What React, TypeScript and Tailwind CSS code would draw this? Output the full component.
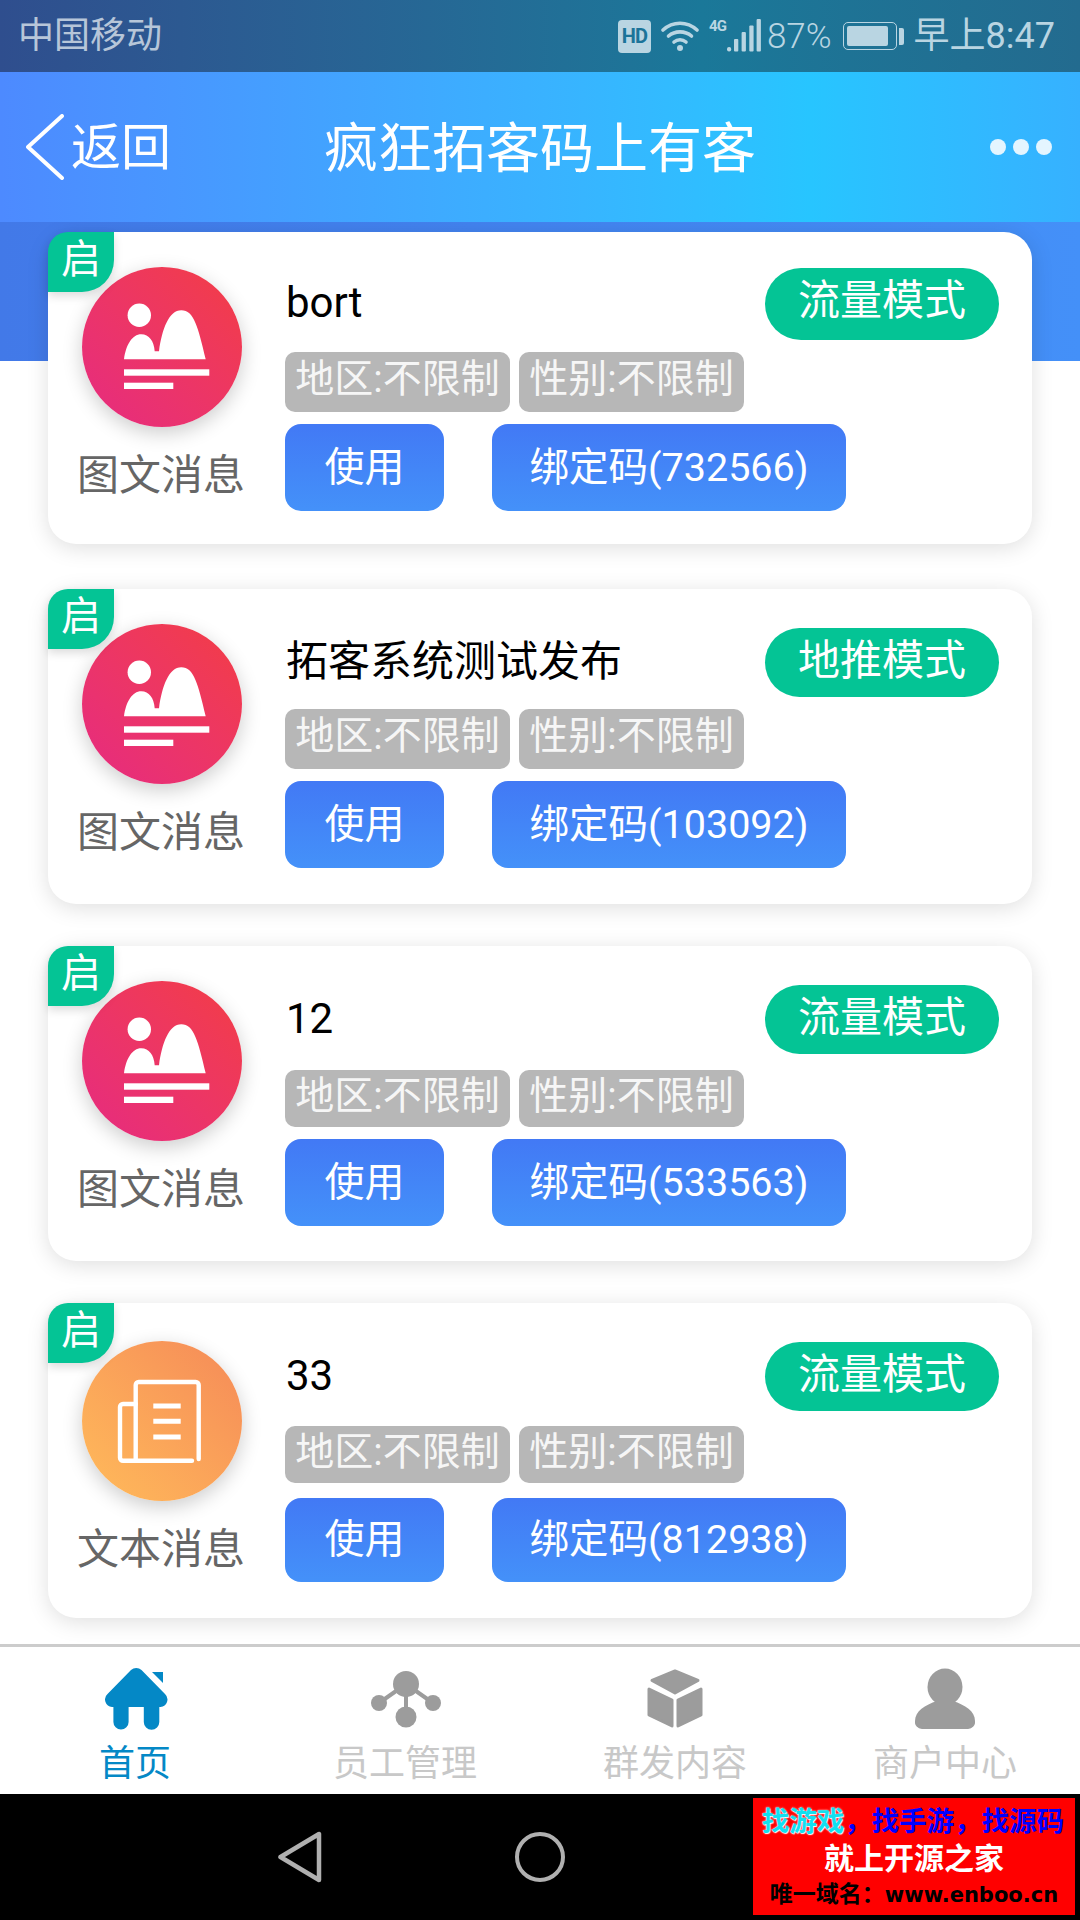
import React from "react";

type Campaign = {
  title: string;
  mode: string;
  code: string;
  kind: "image" | "text";
  card: string;
  circleTop: string;
  bodyTop: string;
  pill: string;
  tagRow: string;
  btnRow: string;
};

const CAMPAIGNS: Campaign[] = [
  {
    title: "bort",
    mode: "流量模式",
    code: "732566",
    kind: "image",
    card: "h-[312px] mt-[0px]",
    circleTop: "mt-[35px]",
    bodyTop: "pt-[36px]",
    pill: "h-[72px] pb-[6px]",
    tagRow: "mt-[12px] h-[60px]",
    btnRow: "mt-[12px] h-[87px]",
  },
  {
    title: "拓客系统测试发布",
    mode: "地推模式",
    code: "103092",
    kind: "image",
    card: "h-[315px] mt-[45px]",
    circleTop: "mt-[35px]",
    bodyTop: "pt-[39px]",
    pill: "h-[69px] pb-[3px]",
    tagRow: "mt-[12px] h-[60px]",
    btnRow: "mt-[12px] h-[87px]",
  },
  {
    title: "12",
    mode: "流量模式",
    code: "533563",
    kind: "image",
    card: "h-[315px] mt-[42px]",
    circleTop: "mt-[35px]",
    bodyTop: "pt-[39px]",
    pill: "h-[69px] pb-[3px]",
    tagRow: "mt-[16px] h-[57px]",
    btnRow: "mt-[12px] h-[87px]",
  },
  {
    title: "33",
    mode: "流量模式",
    code: "812938",
    kind: "text",
    card: "h-[315px] mt-[42px]",
    circleTop: "mt-[38px]",
    bodyTop: "pt-[39px]",
    pill: "h-[69px] pb-[3px]",
    tagRow: "mt-[15px] h-[57px]",
    btnRow: "mt-[15px] h-[84px]",
  },
];

function ImageMsgIcon() {
  return (
    <svg viewBox="0 0 160 160" className="h-[160px] w-[160px]" fill="#fff">
      <circle cx="57.3" cy="48.3" r="11.7" />
      <path d="M42 92.3C44 78 50 67.3 59.3 67.3C67 67.3 72 74 72.7 84.3L77 84.3C80 62 87 43.3 99.3 43.3C112 43.3 116 60 123.7 92.3Z" />
      <rect x="42" y="102.3" width="85.3" height="6.4" />
      <rect x="42" y="115.7" width="49.3" height="6.3" />
    </svg>
  );
}

function TextMsgIcon() {
  return (
    <svg viewBox="0 0 160 160" className="h-[160px] w-[160px]" fill="none" stroke="#fff" strokeWidth="4.4" strokeLinecap="round">
      <path d="M53.7 119.7V44a3 3 0 0 1 3-3H113.7a3 3 0 0 1 3 3V118" />
      <path d="M110 119.7H41a3 3 0 0 1-3-3V66a3 3 0 0 1 3-3H53.7" />
      <path strokeLinecap="butt" strokeWidth="5" d="M71.3 65H98.7M71.3 80.3H98.7M71.3 96H98.7" />
    </svg>
  );
}

function Card({ item }: { item: Campaign }) {
  return (
    <div className={`relative flex rounded-[28px] bg-white shadow-[0_4px_22px_rgba(0,0,0,0.13)] ${item.card}`}>
      {/* status corner */}
      <div className="absolute top-0 left-0 z-10 flex h-[60px] w-[66px] items-center justify-center rounded-tl-[20px] rounded-br-[32px] bg-[#04c495] pb-[4px] text-[40px] leading-none text-white shadow-[0_4px_10px_rgba(0,0,0,0.14)]">
        启
      </div>

      <div className={`ml-[34px] flex w-[160px] shrink-0 flex-col items-center ${item.circleTop}`}>
        <div
          className={`h-[160px] w-[160px] rounded-full shadow-[0_6px_20px_rgba(0,0,0,0.2)] ${
            item.kind === "image"
              ? "bg-gradient-to-tr from-[#e62a80] to-[#f33d43]"
              : "bg-gradient-to-tr from-[#ffbb5a] to-[#f58a58]"
          }`}
        >
          {item.kind === "image" ? <ImageMsgIcon /> : <TextMsgIcon />}
        </div>
        <div className="mt-[21px] -translate-x-px whitespace-nowrap text-[42px] leading-[56px] text-[#666]">
          {item.kind === "image" ? "图文消息" : "文本消息"}
        </div>
      </div>

      <div className={`ml-[43px] flex-1 pr-[33px] ${item.bodyTop}`}>
        <div className="flex items-center justify-between">
          <div className="mb-[2px] ml-px text-[42px] leading-[56px] text-black">{item.title}</div>
          <div className={`flex w-[234px] items-center justify-center rounded-full bg-[#04c495] text-[42px] leading-none text-white ${item.pill}`}>
            {item.mode}
          </div>
        </div>
        <div className={`flex gap-[9px] ${item.tagRow}`}>
          <div className="flex w-[225px] items-center justify-center rounded-[10px] bg-[#b7b7b7] pb-[5px] text-[39px] leading-none whitespace-nowrap text-[#f6f6f6]">
            地区:不限制
          </div>
          <div className="flex w-[225px] items-center justify-center rounded-[10px] bg-[#b7b7b7] pb-[5px] text-[39px] leading-none whitespace-nowrap text-[#f6f6f6]">
            性别:不限制
          </div>
        </div>
        <div className={`flex gap-[48px] ${item.btnRow}`}>
          <div className="flex w-[159px] items-center justify-center rounded-[16px] bg-gradient-to-b from-[#4279f5] to-[#4491f9] text-[40px] leading-none text-white">
            使用
          </div>
          <div className="flex w-[354px] items-center justify-center rounded-[16px] bg-gradient-to-b from-[#4279f5] to-[#4491f9] text-[39.5px] leading-none whitespace-nowrap text-white">
            绑定码({item.code})
          </div>
        </div>
      </div>
    </div>
  );
}

function StatusBar() {
  return (
    <div className="flex h-[72px] items-center justify-between bg-gradient-to-r from-[#2f4e8e] via-[#1a7899] via-65% to-[#236b8f] pr-[25px] pl-[18px]">
      <div className="text-[36px] leading-none text-[#b7c6d9]">中国移动</div>
      <div className="flex items-center text-[#b9d5e2]">
        <div className="flex h-[33px] w-[33px] items-center justify-center rounded-[4px] bg-[#b9d5e2] text-[20px] leading-none font-bold tracking-tighter text-[#1b7499]">
          HD
        </div>
        <svg viewBox="0 0 38 32" className="ml-[10px] h-[32px] w-[38px]" fill="none" stroke="#b9d5e2" strokeWidth="3.6" strokeLinecap="round">
          <path d="M2 10C12 1 26 1 36 10" />
          <path d="M7.5 16C14 10.5 24 10.5 30.5 16" />
          <path d="M13 22C16.5 19 21.5 19 25 22" />
          <circle cx="19" cy="28" r="3" fill="#b9d5e2" stroke="none" />
        </svg>
        <div className="ml-[10px] flex items-start">
          <span className="w-[18px] text-[15px] leading-[14px] font-bold tracking-tighter">4G</span>
          <svg viewBox="18 0 34 34" className="h-[34px] w-[34px]" fill="#b9d5e2">
            <rect x="18" y="28" width="4.2" height="4.5" rx="2" />
            <rect x="25" y="20" width="4.3" height="12.5" rx="1" />
            <rect x="32.6" y="13" width="4.3" height="19.5" rx="1" />
            <rect x="40.3" y="6.5" width="4.3" height="26" rx="1" />
            <rect x="47.6" y="0" width="4.3" height="32.5" rx="1" />
          </svg>
        </div>
        <div className="ml-[6px] text-[35px] leading-none font-light">87%</div>
        <div className="ml-[11px] flex h-[28px] w-[54px] items-center rounded-[5px] border-[1.5px] border-[#b9d5e2] p-[3px]">
          <div className="h-full w-[41px] rounded-[2px] bg-[#b9d5e2]" />
        </div>
        <div className="ml-[2px] h-[17px] w-[5px] rounded-r-[2px] bg-[#b9d5e2]" />
        <div className="ml-[10px] text-[36px] leading-none">早上8:47</div>
      </div>
    </div>
  );
}

function Header() {
  return (
    <div className="grid h-[150px] grid-cols-[1fr_auto_1fr] items-center bg-gradient-to-r from-[#4d8aff] via-[#27c5ff] via-75% to-[#36b1ff] text-white">
      <div className="flex items-center pl-[26px]">
        <svg viewBox="0 0 38 66" className="h-[66px] w-[38px]" fill="none" stroke="#fff" strokeWidth="4" strokeLinecap="round" strokeLinejoin="round">
          <path d="M36 2L2 33L36 64" />
        </svg>
        <span className="mt-[2px] ml-[7px] text-[50px] leading-none">返回</span>
      </div>
      <div className="mt-[6px] text-[54px] leading-none">疯狂拓客码上有客</div>
      <div className="flex justify-end gap-[7px] pr-[28px]">
        <span className="h-[16px] w-[16px] rounded-full bg-[#e4f5ff]" />
        <span className="h-[16px] w-[16px] rounded-full bg-[#e4f5ff]" />
        <span className="h-[16px] w-[16px] rounded-full bg-[#e4f5ff]" />
      </div>
    </div>
  );
}

function TabBar() {
  return (
    <div className="grid h-[150px] grid-cols-4 border-t-[3px] border-[#cccccc] bg-white">
      <div className="flex flex-col items-center pt-[21px]">
        <svg viewBox="0 0 63 62" className="ml-[2px] h-[62px] w-[63px]" fill="#0488c6">
          <path d="M26 2a8 8 0 0 1 10.500 0L60 26a7.500 7.500 0 0 1-4.500 13H54.300V54a7.750 7.750 0 0 1-15.500 0V39H23.600V54a7.600 7.600 0 0 1-15.200 0V39H7a7.500 7.500 0 0 1-4.500-13Z" />
          <path d="M47 4H58V15Z" />
        </svg>
        <div className="mt-[12px] text-[36px] leading-[44px] text-[#0488c6]">首页</div>
      </div>
      <div className="flex flex-col items-center pt-[21px]">
        <svg viewBox="0 0 70 62" className="ml-[2px] h-[62px] w-[70px]" fill="#9c9c9c" stroke="#9c9c9c">
          <path fill="none" strokeWidth="4" d="M8 35L35 16L62 35M35 16V49" />
          <circle cx="35" cy="16" r="13" stroke="none" />
          <circle cx="8" cy="35" r="8" stroke="none" />
          <circle cx="62" cy="35" r="8" stroke="none" />
          <circle cx="35" cy="49" r="10.500" stroke="none" />
        </svg>
        <div className="mt-[12px] text-[36px] leading-[44px] text-[#c8c8c8]">员工管理</div>
      </div>
      <div className="flex flex-col items-center pt-[21px]">
        <svg viewBox="0 0 56 62" className="h-[62px] w-[56px]" fill="#9c9c9c" stroke="#9c9c9c" strokeWidth="3" strokeLinejoin="round">
          <path d="M28 3L51 12.500L28 25L5 12.500Z" />
          <path d="M2 21L25 32V58L2 47Z" />
          <path d="M54 21L31 32V58L54 47Z" />
        </svg>
        <div className="mt-[12px] text-[36px] leading-[44px] text-[#c8c8c8]">群发内容</div>
      </div>
      <div className="flex flex-col items-center pt-[21px]">
        <svg viewBox="0 0 60 62" className="h-[62px] w-[60px]" fill="#9c9c9c">
          <ellipse cx="30" cy="19" rx="17.500" ry="18.500" />
          <path d="M0 53C0 43 10 37 22 33H38C50 37 60 43 60 53a7 7 0 0 1-7 8H7a7 7 0 0 1-7-8Z" />
        </svg>
        <div className="mt-[12px] text-[36px] leading-[44px] text-[#c8c8c8]">商户中心</div>
      </div>
    </div>
  );
}

function NavBar() {
  return (
    <div className="relative flex h-[126px] items-center gap-[193px] bg-black pl-[278px]">
      <svg viewBox="0 0 44 52" className="h-[52px] w-[44px]" fill="none" stroke="#b0b0b0" strokeWidth="4.500" strokeLinejoin="round">
        <path d="M2.500 26L41 3V49Z" />
      </svg>
      <div className="h-[50px] w-[50px] rounded-full border-[4.500px] border-[#b0b0b0]" />

      {/* promo watermark pasted over the nav bar */}
      <div className="absolute top-[4px] left-[753px] flex h-[117px] w-[322px] flex-col items-center bg-[#ff0000] pt-[5px] font-bold">
        <div className="-translate-x-px text-[27.5px] leading-[37px] whitespace-nowrap text-[#0000ff]">
          <span className="text-[#12e0f0] [text-shadow:0_0_2px_#fff,1px_1px_1px_#fff]">找游戏</span>，找手游，找源码
        </div>
        <div className="text-[30px] leading-[37px] whitespace-nowrap text-white">就上开源之家</div>
        <div className="text-[23px] leading-[36px] whitespace-nowrap text-black">
          唯一域名：<span className="[font-family:'DejaVu_Sans',sans-serif] text-[21px]">www.enboo.cn</span>
        </div>
      </div>
    </div>
  );
}

export default function App() {
  return (
    <div className="flex h-[1920px] w-[1080px] flex-col overflow-hidden bg-white [font-family:Roboto,'Noto_Sans_CJK_SC',sans-serif]">
      <StatusBar />
      <Header />
      <div className="h-[1422px] shrink-0 overflow-hidden">
        <div className="h-[139px] bg-gradient-to-r from-[#4279e8] to-[#4490f8]" />
        <div className="-mt-[129px] px-[48px]">
          {CAMPAIGNS.map((item) => (
            <Card key={item.code} item={item} />
          ))}
        </div>
      </div>
      <TabBar />
      <NavBar />
    </div>
  );
}
